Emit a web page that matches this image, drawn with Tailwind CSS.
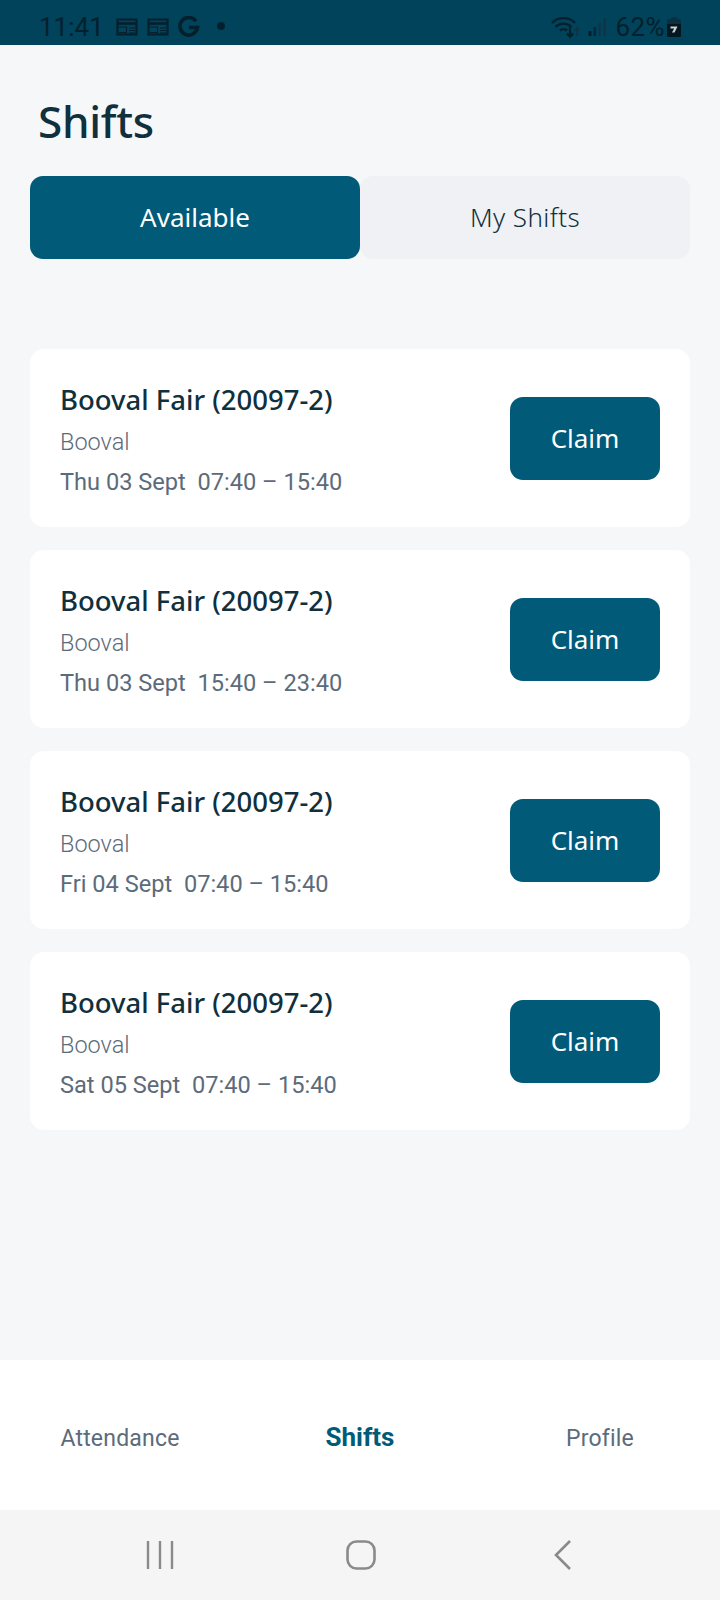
<!doctype html>
<html>
<head>
<meta charset="utf-8">
<script src="https://cdn.jsdelivr.net/npm/@tailwindcss/browser@4"></script>
</head>
<body class="m-0">
<div class="w-[720px] h-[1600px] flex flex-col bg-[#f6f7f9] font-['Noto_Sans',sans-serif] overflow-hidden">
  <!-- status bar -->
  <div class="h-[45px] shrink-0 bg-[#00435b] flex items-center pt-[8px] pl-[39px] pr-[39px] text-[#03202c] font-['Roboto',sans-serif]">
    <span class="text-[26px] leading-[36px]">11:41</span>
    <svg class="ml-[12px]" width="22" height="20" viewBox="0 0 22 20" fill="none" stroke="#03202c" stroke-width="2.200"><path d="M1.500 2.500h19v15h-19z"/><path d="M1.500 6.500h19" stroke-width="2.600"/><path d="M3 10h7M3 15.500h7M10.500 9.500v7M13 11h6M13 13.500h6M13 16h6" stroke-width="1.200"/></svg>
    <svg class="ml-[9px]" width="22" height="20" viewBox="0 0 22 20" fill="none" stroke="#03202c" stroke-width="2.200"><path d="M1.500 2.500h19v15h-19z"/><path d="M1.500 6.500h19" stroke-width="2.600"/><path d="M3 10h7M3 15.500h7M10.500 9.500v7M13 11h6M13 13.500h6M13 16h6" stroke-width="1.200"/></svg>
    <svg class="ml-[9px]" width="22" height="22" viewBox="0 0 22 22" fill="none" stroke="#03202c" stroke-width="3.600"><path d="M18 5.200A8.800 8.800 0 1 0 19.500 11.500H11"/></svg>
    <span class="ml-[17px] w-[8px] h-[8px] rounded-full bg-[#03202c] mt-[-2px]"></span>
    <span class="flex-1"></span>
    <svg width="30" height="24" viewBox="0 0 30 24" fill="none" class="mr-[7px]" stroke="#03202c"><path d="M1 8C7 1.500 18 1.500 24 8" stroke-width="2.400"/><path d="M4.500 12C9 7.500 16 7.500 20.500 12" stroke-width="2.400"/><path d="M9 15.500C11 13.800 14 13.800 16 15.500" stroke-width="2.400"/><path d="M19 12v10M15.800 18.500l3.200 3.200 3.200-3.200" stroke-width="2.200"/><path d="M26 21v-8M23.500 15.500 26 13l2.500 2.500" stroke="#0f3446" stroke-width="1.800"/></svg>
    <svg width="18" height="20" viewBox="0 0 18 20" class="mr-[10px]" fill="#03202c"><rect x="0.500" y="14" width="3" height="5"/><rect x="5.500" y="10" width="2.600" height="9" fill="#07283a"/><rect x="10.500" y="6" width="2.200" height="13" fill="#0f3446"/><rect x="15.500" y="1" width="2.200" height="18" fill="#0f3446"/></svg>
    <span class="text-[26px] leading-[36px] tracking-[0.4px]">62%</span>
    <svg class="ml-[2px]" width="14" height="20" viewBox="0 0 14 20"><path d="M4 0h6v2h3a1 1 0 0 1 1 1v5H0V3a1 1 0 0 1 1-1h3z" fill="#0c3040"/><path d="M0 7h14v12a1 1 0 0 1-1 1H1a1 1 0 0 1-1-1z" fill="#04161f"/><path d="M3.500 9.500h7l-3 6H5l2.200-4H3.500z" fill="#c9d2d6"/></svg>
  </div>

  <main class="flex-1 flex flex-col px-[30px]">
    <h1 class="text-[44px] leading-[58px] font-medium text-[#10303d] pl-[8px] pt-[47px] tracking-[-0.3px]">Shifts</h1>
    <div class="flex mt-[26px] h-[83px]">
      <div class="w-[330px] rounded-[13px] bg-[#005a78] text-white text-[26px] flex items-center justify-center">Available</div>
      <div class="w-[330px] rounded-[13px] bg-[#f0f1f5] text-[#10303d] text-[26px] font-light tracking-[0.4px] flex items-center justify-center">My Shifts</div>
    </div>
    <div class="flex flex-col gap-[23px] mt-[90px]">
      <div class="h-[178px] rounded-[14px] bg-white flex items-center justify-between pl-[30px] pr-[30px]">
        <div class="flex flex-col mt-[4px]">
          <div class="text-[27.5px] leading-[38px] font-medium text-[#10303d] mt-[-2px]">Booval Fair (20097-2)</div>
          <div class="font-['Roboto',sans-serif] text-[23.5px] leading-[30px] mt-[8px] font-light text-[#5c6b7a]">Booval</div>
          <div class="font-['Roboto',sans-serif] text-[23.6px] leading-[30px] mt-[10px] text-[#5c6b7a] whitespace-pre">Thu 03 Sept  07:40 – 15:40</div>
        </div>
        <div class="w-[150px] h-[83px] rounded-[13px] bg-[#005a78] text-white text-[26px] flex items-center justify-center">Claim</div>
      </div>
      <div class="h-[178px] rounded-[14px] bg-white flex items-center justify-between pl-[30px] pr-[30px]">
        <div class="flex flex-col mt-[4px]">
          <div class="text-[27.5px] leading-[38px] font-medium text-[#10303d] mt-[-2px]">Booval Fair (20097-2)</div>
          <div class="font-['Roboto',sans-serif] text-[23.5px] leading-[30px] mt-[8px] font-light text-[#5c6b7a]">Booval</div>
          <div class="font-['Roboto',sans-serif] text-[23.6px] leading-[30px] mt-[10px] text-[#5c6b7a] whitespace-pre">Thu 03 Sept  15:40 – 23:40</div>
        </div>
        <div class="w-[150px] h-[83px] rounded-[13px] bg-[#005a78] text-white text-[26px] flex items-center justify-center">Claim</div>
      </div>
      <div class="h-[178px] rounded-[14px] bg-white flex items-center justify-between pl-[30px] pr-[30px]">
        <div class="flex flex-col mt-[4px]">
          <div class="text-[27.5px] leading-[38px] font-medium text-[#10303d] mt-[-2px]">Booval Fair (20097-2)</div>
          <div class="font-['Roboto',sans-serif] text-[23.5px] leading-[30px] mt-[8px] font-light text-[#5c6b7a]">Booval</div>
          <div class="font-['Roboto',sans-serif] text-[23.6px] leading-[30px] mt-[10px] text-[#5c6b7a] whitespace-pre">Fri 04 Sept  07:40 – 15:40</div>
        </div>
        <div class="w-[150px] h-[83px] rounded-[13px] bg-[#005a78] text-white text-[26px] flex items-center justify-center">Claim</div>
      </div>
      <div class="h-[178px] rounded-[14px] bg-white flex items-center justify-between pl-[30px] pr-[30px]">
        <div class="flex flex-col mt-[4px]">
          <div class="text-[27.5px] leading-[38px] font-medium text-[#10303d] mt-[-2px]">Booval Fair (20097-2)</div>
          <div class="font-['Roboto',sans-serif] text-[23.5px] leading-[30px] mt-[8px] font-light text-[#5c6b7a]">Booval</div>
          <div class="font-['Roboto',sans-serif] text-[23.6px] leading-[30px] mt-[10px] text-[#5c6b7a] whitespace-pre">Sat 05 Sept  07:40 – 15:40</div>
        </div>
        <div class="w-[150px] h-[83px] rounded-[13px] bg-[#005a78] text-white text-[26px] flex items-center justify-center">Claim</div>
      </div>
    </div>
  </main>

  <nav class="h-[150px] shrink-0 bg-white grid grid-cols-3 items-center pt-[8px] font-['Roboto',sans-serif] text-[23px] text-[#5c6b7a]">
    <div class="text-center tracking-[0.2px]">Attendance</div>
    <div class="text-center font-bold text-[26px] text-[#005a78] leading-[28px] mt-[-4px]">Shifts</div>
    <div class="text-center tracking-[0.2px]">Profile</div>
  </nav>
  <div class="h-[90px] shrink-0 bg-[#f5f5f5] flex items-center pl-[145px]">
    <svg width="30" height="30" viewBox="0 0 30 30" fill="none" stroke="#8a8a8a" stroke-width="2.400"><path d="M3 1v28M15 1v28M27 1v28"/></svg>
    <svg width="30" height="30" viewBox="0 0 30 30" fill="none" stroke="#8a8a8a" stroke-width="2.600" class="ml-[171px]"><rect x="1.500" y="1.500" width="27" height="27" rx="9"/></svg>
    <svg width="20" height="30" viewBox="0 0 20 30" fill="none" stroke="#8a8a8a" stroke-width="2.600" class="ml-[177px]"><path d="M17 1 3 15l14 14"/></svg>
  </div>
</div>
</body>
</html>
